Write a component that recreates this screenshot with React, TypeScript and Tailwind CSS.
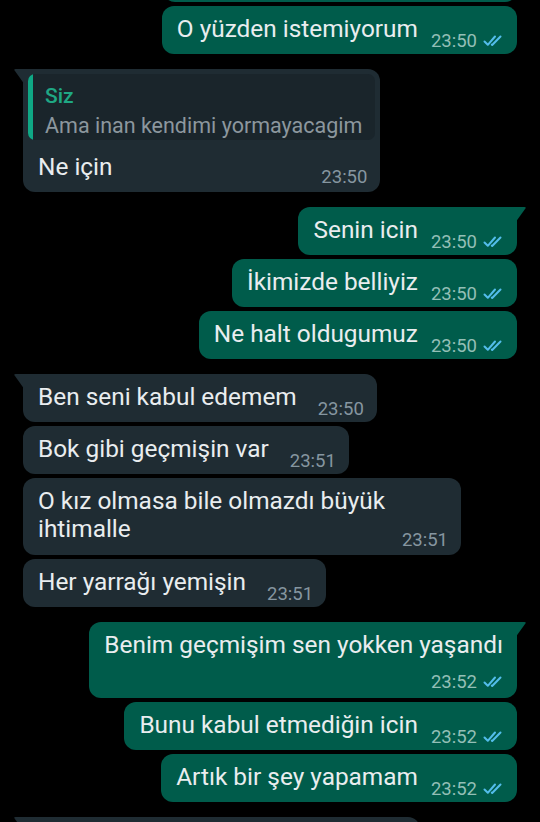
import React from "react";

const SENT = "bg-[#005c4b]";
const RECV = "bg-[#1f2c33]";

function Ticks() {
  return (
    <svg width="20" height="12" viewBox="0 0 20 12" className="ml-[6px] shrink-0" fill="none" stroke="#53bdeb" strokeWidth="2" strokeLinecap="round" strokeLinejoin="round">
      <path d="M1.5 6.5 L4.8 9.8 L12 1.5" />
      <path d="M8.8 9.6 L9.2 10 L17.5 1.5" />
    </svg>
  );
}

function TailOut() {
  return (
    <svg width="12" height="16" viewBox="0 0 12 16" className="absolute top-0 right-[-10px]">
      <path d="M0 0 H9.5 Q11.5 0 10.4 1.6 L0 16 Z" fill="#005c4b" />
    </svg>
  );
}

function TailIn() {
  return (
    <svg width="12" height="16" viewBox="0 0 12 16" className="absolute top-0 left-[-10px]">
      <path d="M12 0 H2.5 Q0.5 0 1.6 1.6 L12 16 Z" fill="#1f2c33" />
    </svg>
  );
}

function Meta({ time, out }: { time: string; out: boolean }) {
  return (
    <span
      className={
        "flex items-center shrink-0 leading-[20px] text-[18.5px] whitespace-nowrap " +
        (out ? "ml-[13px] text-[#93bfb6]" : "ml-[21px] text-[#8696a0]")
      }
    >
      {time}
      {out && <Ticks />}
    </span>
  );
}

type BubbleProps = {
  out: boolean;
  tail?: boolean;
  time: string;
  text: string;
  variant?: "inline" | "wrap";
  first?: boolean;
};

const TXT = "text-[24.4px] leading-[28px] text-[#e9edef]";

function Bubble({ out, tail, time, text, variant = "inline", first }: BubbleProps) {
  const side = out ? "self-end mr-[23px]" : "self-start ml-[23px]";
  const color = out ? SENT : RECV;
  const radius = tail ? (out ? "rounded-[12px] rounded-tr-none" : "rounded-[12px] rounded-tl-none") : "rounded-[12px]";
  return (
    <div className={`relative ${side} ${color} ${radius} ${first ? "mt-[15px]" : "mt-[4px]"} pl-[15px] ${out ? "pr-[14px]" : "pr-[13px]"}`}>
      {tail && (out ? <TailOut /> : <TailIn />)}
      {variant === "inline" ? (
        <div className="flex items-end pt-[9px] pb-[3px]">
          <span className={`${TXT} mb-[8px] whitespace-nowrap`}>{text}</span>
          <Meta time={time} out={out} />
        </div>
      ) : (
        <div className="flex flex-col pt-[9px] pb-[6px]">
          <span className={`${TXT} whitespace-nowrap`}>{text}</span>
          <div className="flex justify-end mt-[13px]">
            <Meta time={time} out={out} />
          </div>
        </div>
      )}
    </div>
  );
}

export default function App() {
  return (
    <div className="w-[540px] h-[822px] overflow-hidden bg-black font-['Roboto',sans-serif]">
      <div className="flex flex-col">
        {/* previous bubble, mostly scrolled off */}
        <div className={`self-end mr-[23px] ${SENT} rounded-[12px] w-[354px] h-[48px] -mt-[46px]`} />

        <Bubble out time="23:50" text="O yüzden istemiyorum" />

        {/* received reply with quote */}
        <div className={`relative self-start ml-[23px] mt-[15px] ${RECV} rounded-[12px] rounded-tl-none px-[5px]`}>
          <TailIn />
          <div className="mt-[5px] flex rounded-[7px] bg-[#1a252b] overflow-hidden">
            <div className="w-[5px] bg-[#0fa885] shrink-0" />
            <div className="pl-[12px] pr-[13px] pt-[9px] pb-[1px] flex flex-col gap-[4px]">
              <span className="text-[21px] leading-[26px] font-medium text-[#1fa884]">Siz</span>
              <span className="text-[21.5px] leading-[26px] text-[#8c979e] whitespace-nowrap">Ama inan kendimi yormayacagim</span>
            </div>
          </div>
          <div className="flex items-end justify-between pl-[10px] pr-[8px] pt-[13px] pb-[5px]">
            <span className={`${TXT} mb-[6px]`}>Ne için</span>
            <Meta time="23:50" out={false} />
          </div>
        </div>

        <Bubble out tail first time="23:50" text="Senin icin" />
        <Bubble out time="23:50" text="İkimizde belliyiz" />
        <Bubble out time="23:50" text="Ne halt oldugumuz" />

        <Bubble out={false} tail first time="23:50" text="Ben seni kabul edemem" />
        <Bubble out={false} time="23:51" text="Bok gibi geçmişin var" />

        {/* multi-line received */}
        <div className={`relative self-start ml-[23px] mt-[4px] ${RECV} rounded-[12px] w-[438px] pl-[15px] pr-[13px] pt-[9px] pb-[5px]`}>
          <div className={`${TXT} whitespace-nowrap`}>O kız olmasa bile olmazdı büyük</div>
          <div className="flex items-end justify-between">
            <span className={`${TXT} mb-[7px]`}>ihtimalle</span>
            <Meta time="23:51" out={false} />
          </div>
        </div>

        <Bubble out={false} time="23:51" text="Her yarrağı yemişin" />

        <Bubble out tail first variant="wrap" time="23:52" text="Benim geçmişim sen yokken yaşandı" />
        <Bubble out time="23:52" text="Bunu kabul etmediğin icin" />
        <Bubble out time="23:52" text="Artık bir şey yapamam" />

        {/* next received bubble, cut off at bottom */}
        <div className={`relative self-start ml-[23px] mt-[15px] ${RECV} rounded-[12px] rounded-tl-none w-[397px] h-[48px]`}>
          <TailIn />
        </div>
      </div>
    </div>
  );
}
